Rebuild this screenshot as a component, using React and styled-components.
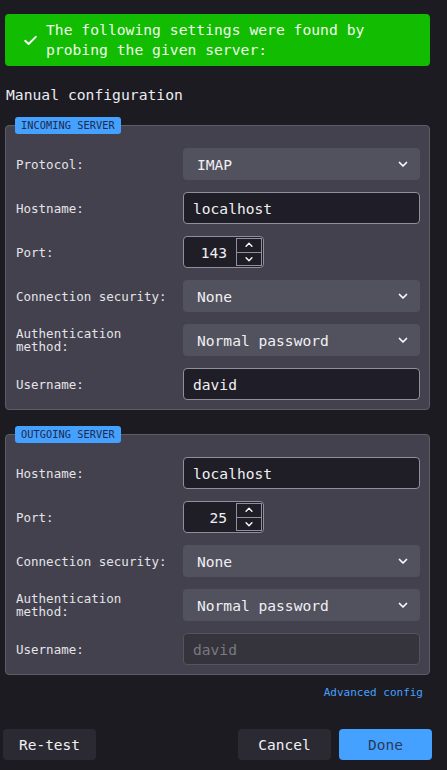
import React from 'react';
import styled, { createGlobalStyle } from 'styled-components';

const GlobalStyle = createGlobalStyle`
  html, body {
    margin: 0;
    background: #1c1b22;
    color: #fbfbfe;
    font-family: 'DejaVu Sans Mono', monospace;
  }
`;

const Page = styled.div`
  width: 447px;
  height: 770px;
  box-sizing: border-box;
  padding: 14px 17px 10px 5px;
  display: flex;
  flex-direction: column;
`;

const Banner = styled.div`
  background: #12bc00;
  border-radius: 4px;
  height: 52px;
  box-sizing: border-box;
  display: flex;
  align-items: center;
  gap: 9px;
  padding: 0 12px 0 19px;
  font-size: 14.7px;
  line-height: 20px;
  color: #effaed;
`;

const Heading = styled.div`
  margin-top: 19px;
  font-size: 14.7px;
  line-height: 20px;
  height: 20px;
  padding-left: 1px;
  color: #ececf0;
`;

const Fieldset = styled.div`
  position: relative;
  margin-top: ${(p) => p.$top}px;
  background: #42414d;
  border: 1px solid #5e5d67;
  border-radius: 4px;
  padding: 22px 9px 9px 10px;
  display: flex;
  flex-direction: column;
  gap: 12px;
`;

const Badge = styled.div`
  position: absolute;
  top: -9px;
  left: 9px;
  background: #45a1ff;
  color: #1d2a4a;
  border-radius: 3px;
  font-size: 10.3px;
  line-height: 17px;
  padding: 0 6px;
  letter-spacing: 0.05px;
`;

const Row = styled.div`
  display: grid;
  grid-template-columns: 167px 1fr;
  align-items: center;
  height: 32px;
`;

const Label = styled.div`
  font-size: 12.5px;
  line-height: 13px;
  padding-right: 14px;
  color: #e4e4e8;
`;

const Select = styled.div`
  height: 32px;
  box-sizing: border-box;
  background: #52525e;
  border-radius: 4px;
  display: flex;
  align-items: center;
  justify-content: space-between;
  padding: 0 11px 0 14px;
  font-size: 14.6px;
  color: #f0f0f4;
`;

const Input = styled.div`
  height: 32px;
  box-sizing: border-box;
  background: ${(p) => (p.$disabled ? '#35343c' : '#1f1e26')};
  border: 1px solid ${(p) => (p.$disabled ? '#55545c' : '#8f8f9d')};
  border-radius: 4px;
  display: flex;
  align-items: center;
  padding: 0 9px;
  font-size: 14.6px;
  color: ${(p) => (p.$disabled ? '#7a7980' : '#f0f0f4')};
`;

const PortBox = styled.div`
  width: 81px;
  height: 32px;
  box-sizing: border-box;
  background: #1f1e26;
  border: 1px solid #8f8f9d;
  border-radius: 4px;
  display: flex;
  align-items: center;
`;

const PortValue = styled.div`
  flex: 1;
  text-align: right;
  padding-right: 9px;
  font-size: 14.6px;
  color: #f0f0f4;
`;

const Spinner = styled.div`
  width: 26px;
  height: 28px;
  margin-right: 1px;
  display: flex;
  flex-direction: column;
  border: 1px solid #8f8f9d;
  box-sizing: border-box;
`;

const SpinHalf = styled.div`
  flex: 1;
  display: flex;
  align-items: center;
  justify-content: center;
  border-top: ${(p) => (p.$down ? '1px solid #8f8f9d' : 'none')};
`;

const LinkRow = styled.div`
  display: flex;
  justify-content: flex-end;
  margin-top: 11px;
  padding-right: 7px;
  font-size: 11px;
  line-height: 14px;
  color: #45a1ff;
`;

const Footer = styled.div`
  display: flex;
  align-items: center;
  gap: 8px;
  margin: auto -2px 0 -2px;
`;

const Button = styled.div`
  width: 93px;
  height: 31px;
  box-sizing: border-box;
  border-radius: 4px;
  display: flex;
  align-items: center;
  justify-content: center;
  font-size: 14.5px;
  background: ${(p) => (p.$primary ? '#45a1ff' : '#2b2a33')};
  color: ${(p) => (p.$primary ? '#2a3a5a' : '#f0f0f4')};
  margin-left: ${(p) => (p.$push ? 'auto' : '0')};
`;

const Chevron = ({ size = 12, up }) => (
  <svg width={size} height={size} viewBox="0 0 12 12">
    <path
      d={up ? 'M2.5 7.5 L6 4 L9.5 7.5' : 'M2.5 4.5 L6 8 L9.5 4.5'}
      fill="none"
      stroke="#fbfbfe"
      strokeWidth="1.7"
      strokeLinecap="round"
      strokeLinejoin="round"
    />
  </svg>
);

const Check = () => (
  <svg width="13" height="13" viewBox="0 0 13 13" style={{ flexShrink: 0 }}>
    <path
      d="M1.2 6.8 L4.6 10 L11.8 2.8"
      fill="none"
      stroke="#ffffff"
      strokeWidth="1.9"
      strokeLinecap="round"
      strokeLinejoin="round"
    />
  </svg>
);

const SelectField = ({ value }) => (
  <Select>
    <span>{value}</span>
    <Chevron />
  </Select>
);

const PortField = ({ value }) => (
  <PortBox>
    <PortValue>{value}</PortValue>
    <Spinner>
      <SpinHalf>
        <Chevron size={10} up />
      </SpinHalf>
      <SpinHalf $down>
        <Chevron size={10} />
      </SpinHalf>
    </Spinner>
  </PortBox>
);

const incoming = [
  { label: 'Protocol:', kind: 'select', value: 'IMAP' },
  { label: 'Hostname:', kind: 'input', value: 'localhost' },
  { label: 'Port:', kind: 'port', value: '143' },
  { label: 'Connection security:', kind: 'select', value: 'None' },
  { label: 'Authentication method:', kind: 'select', value: 'Normal password' },
  { label: 'Username:', kind: 'input', value: 'david' },
];

const outgoing = [
  { label: 'Hostname:', kind: 'input', value: 'localhost' },
  { label: 'Port:', kind: 'port', value: '25' },
  { label: 'Connection security:', kind: 'select', value: 'None' },
  { label: 'Authentication method:', kind: 'select', value: 'Normal password' },
  { label: 'Username:', kind: 'input', value: 'david', disabled: true },
];

const renderControl = (field) => {
  switch (field.kind) {
    case 'select':
      return <SelectField value={field.value} />;
    case 'port':
      return <PortField value={field.value} />;
    default:
      return <Input $disabled={field.disabled}>{field.value}</Input>;
  }
};

const ServerBox = ({ title, fields, top }) => (
  <Fieldset $top={top}>
    <Badge>{title}</Badge>
    {fields.map((f) => (
      <Row key={f.label}>
        <Label>{f.label}</Label>
        {renderControl(f)}
      </Row>
    ))}
  </Fieldset>
);

const App = () => (
  <>
    <GlobalStyle />
    <Page>
      <Banner>
        <Check />
        <span>The following settings were found by probing the given server:</span>
      </Banner>
      <Heading>Manual configuration</Heading>
      <ServerBox title="INCOMING SERVER" fields={incoming} top={20} />
      <ServerBox title="OUTGOING SERVER" fields={outgoing} top={24} />
      <LinkRow>Advanced config</LinkRow>
      <Footer>
        <Button>Re-test</Button>
        <Button $push>Cancel</Button>
        <Button $primary>Done</Button>
      </Footer>
    </Page>
  </>
);

export default App;
